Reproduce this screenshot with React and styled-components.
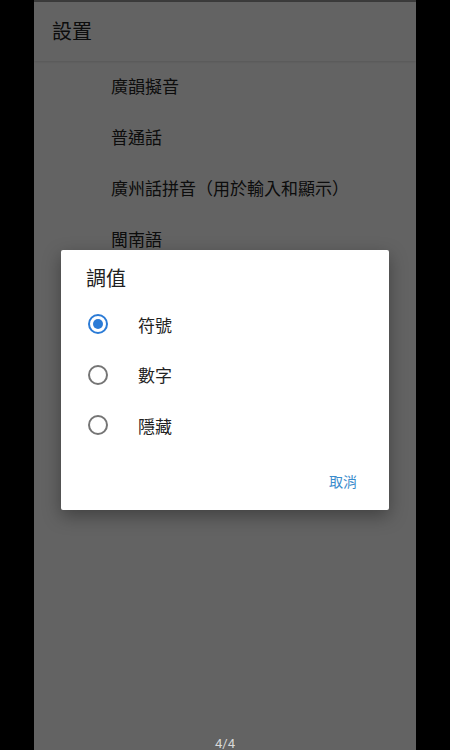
import React from 'react'
import styled, { createGlobalStyle } from 'styled-components'

const Global = createGlobalStyle`
  html, body {
    margin: 0;
    padding: 0;
    background: #000;
  }
  * {
    box-sizing: border-box;
  }
`

const Stage = styled.div`
  width: 450px;
  height: 750px;
  display: flex;
  justify-content: center;
  background: #000;
  font-family: "Noto Sans CJK TC", "Noto Sans", sans-serif;
  overflow: hidden;
`

const Screen = styled.div`
  position: relative;
  width: 382px;
  height: 750px;
  background: #fff;
  display: flex;
  flex-direction: column;
`

const StatusStrip = styled.div`
  height: 2px;
  background: #999;
`

const Header = styled.div`
  height: 59px;
  display: flex;
  align-items: center;
  padding: 0 0 3px 18px;
  font-size: 20px;
  color: #222;
  box-shadow: 0 1px 2px rgba(0, 0, 0, 0.12);
`

const List = styled.div`
  display: flex;
  flex-direction: column;
`

const Item = styled.div`
  height: 51px;
  display: flex;
  align-items: center;
  padding: 0 0 2px 77px;
  font-size: 17px;
  color: #222;
`

const Scrim = styled.div`
  position: absolute;
  inset: 0;
  background: rgba(0, 0, 0, 0.61);
  display: flex;
  justify-content: center;
  align-items: center;
  padding-top: 10px;
`

const Dialog = styled.div`
  width: 328px;
  height: 260px;
  background: #fff;
  border-radius: 2px;
  box-shadow: 0 6px 18px rgba(0, 0, 0, 0.35);
  display: flex;
  flex-direction: column;
  padding: 14px 0 0;
`

const Title = styled.div`
  padding-left: 25px;
  font-size: 20px;
  line-height: 28px;
  color: #212121;
  margin-bottom: 7px;
`

const Option = styled.label`
  height: 50.5px;
  display: flex;
  align-items: center;
  padding-left: 27px;
  gap: 30px;
  font-size: 17px;
  color: #222;
`

const Radio = styled.span`
  width: 20px;
  height: 20px;
  border-radius: 50%;
  border: 2px solid ${p => (p.checked ? '#2b7bd6' : '#757575')};
  display: flex;
  align-items: center;
  justify-content: center;

  &::after {
    content: "";
    width: 10px;
    height: 10px;
    border-radius: 50%;
    background: ${p => (p.checked ? '#2b7bd6' : 'transparent')};
  }
`

const Actions = styled.div`
  display: flex;
  justify-content: flex-end;
  padding: 20px 32px 0 0;
`

const TextButton = styled.button`
  border: none;
  background: none;
  padding: 0;
  font-family: inherit;
  font-size: 14px;
  color: #3a8ccc;
`

const PageIndicator = styled.div`
  position: absolute;
  left: 0;
  right: 0;
  bottom: 0;
  text-align: center;
  font-size: 13px;
  line-height: 13px;
  color: #d8d8d8;
  font-family: "Roboto", "Noto Sans", sans-serif;
`

const items = ['廣韻擬音', '普通話', '廣州話拼音（用於輸入和顯示）', '閩南語']
const options = ['符號', '數字', '隱藏']

export default function App() {
  return (
    <Stage>
      <Global />
      <Screen>
        <StatusStrip />
        <Header>設置</Header>
        <List>
          {items.map(t => (
            <Item key={t}>{t}</Item>
          ))}
        </List>
        <Scrim>
          <Dialog>
            <Title>調值</Title>
            {options.map((o, i) => (
              <Option key={o}>
                <Radio checked={i === 0} />
                {o}
              </Option>
            ))}
            <Actions>
              <TextButton>取消</TextButton>
            </Actions>
          </Dialog>
        </Scrim>
        <PageIndicator>4/4</PageIndicator>
      </Screen>
    </Stage>
  )
}
